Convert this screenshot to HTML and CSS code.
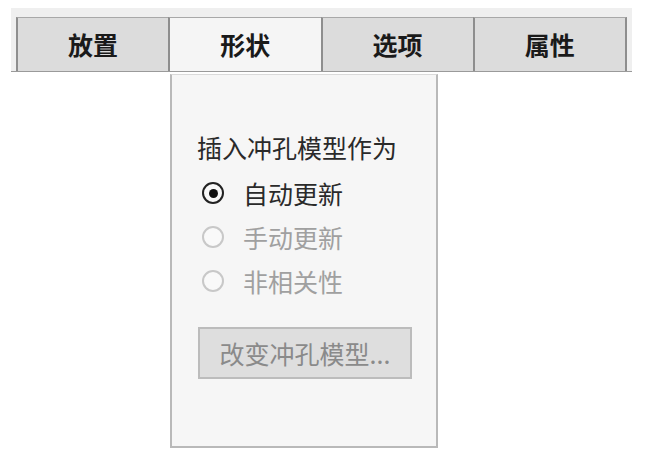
FILE: index.html
```html
<!DOCTYPE html>
<html lang="zh-CN">
<head>
<meta charset="utf-8">
<link rel="stylesheet" href="styles.css">
</head>
<body>
<div class="strip">
  <div class="tabs">
    <div class="tab">放置</div>
    <div class="tab active">形状</div>
    <div class="tab">选项</div>
    <div class="tab last">属性</div>
  </div>
</div>
<div class="panel">
  <div class="title">插入冲孔模型作为</div>
  <div class="row"><span class="radio checked"></span><span class="label">自动更新</span></div>
  <div class="row disabled"><span class="radio"></span><span class="label">手动更新</span></div>
  <div class="row disabled"><span class="radio"></span><span class="label">非相关性</span></div>
  <div class="button">改变冲孔模型...</div>
</div>
</body>
</html>
```
FILE: styles.css
```css
html, body {
  margin: 0;
  padding: 0;
  background: #ffffff;
  font-family: "Noto Sans CJK SC", "Noto Sans", sans-serif;
}
.strip {
  margin: 8px 0 0 11px;
  width: 611px;
  height: 54px;
  background: #efefef;
  border-bottom: 1px solid #9a9a9a;
  padding: 9px 5px 0 5px;
  box-sizing: content-box;
}
.tabs {
  display: flex;
  height: 54px;
}
.tab {
  flex: 1;
  box-sizing: border-box;
  border-top: 1px solid #a8a8a8;
  border-left: 2px solid #8e8e8e;
  background: #dcdcdc;
  color: #1a1a1a;
  font-size: 25px;
  font-weight: 700;
  display: flex;
  align-items: center;
  justify-content: center;
  padding-bottom: 2px;
}
.tab.last {
  border-right: 2px solid #8e8e8e;
}
.tab.active {
  background: #f5f5f5;
}
.panel {
  margin: 2px 0 0 170px;
  width: 268px;
  height: 374px;
  box-sizing: border-box;
  background: #f6f6f6;
  border: 2px solid #b9b9b9;
  border-top: 1px solid #dadada;
  padding: 54px 0 0 25px;
}
.title {
  font-size: 25px;
  line-height: 36px;
  height: 36px;
  color: #2a2a2a;
  margin-bottom: 6px;
}
.row {
  display: flex;
  align-items: center;
  height: 44px;
  font-size: 25px;
  color: #2a2a2a;
}
.row.disabled {
  color: #a0a0a0;
}
.radio {
  width: 22px;
  height: 22px;
  box-sizing: border-box;
  border-radius: 50%;
  border: 2px solid #c8c8c8;
  margin-left: 5px;
  margin-right: 19px;
  display: flex;
  align-items: center;
  justify-content: center;
  background: #f9f9f9;
}
.radio.checked {
  border: 2.5px solid #222222;
}
.radio.checked::after {
  content: "";
  width: 9px;
  height: 9px;
  border-radius: 50%;
  background: #111111;
}
.button {
  margin: 24px 0 0 1px;
  width: 214px;
  height: 52px;
  box-sizing: border-box;
  background: #dedede;
  border: 2px solid #bcbcbc;
  color: #8a8a8a;
  font-size: 25px;
  display: flex;
  align-items: center;
  justify-content: center;
}
```
